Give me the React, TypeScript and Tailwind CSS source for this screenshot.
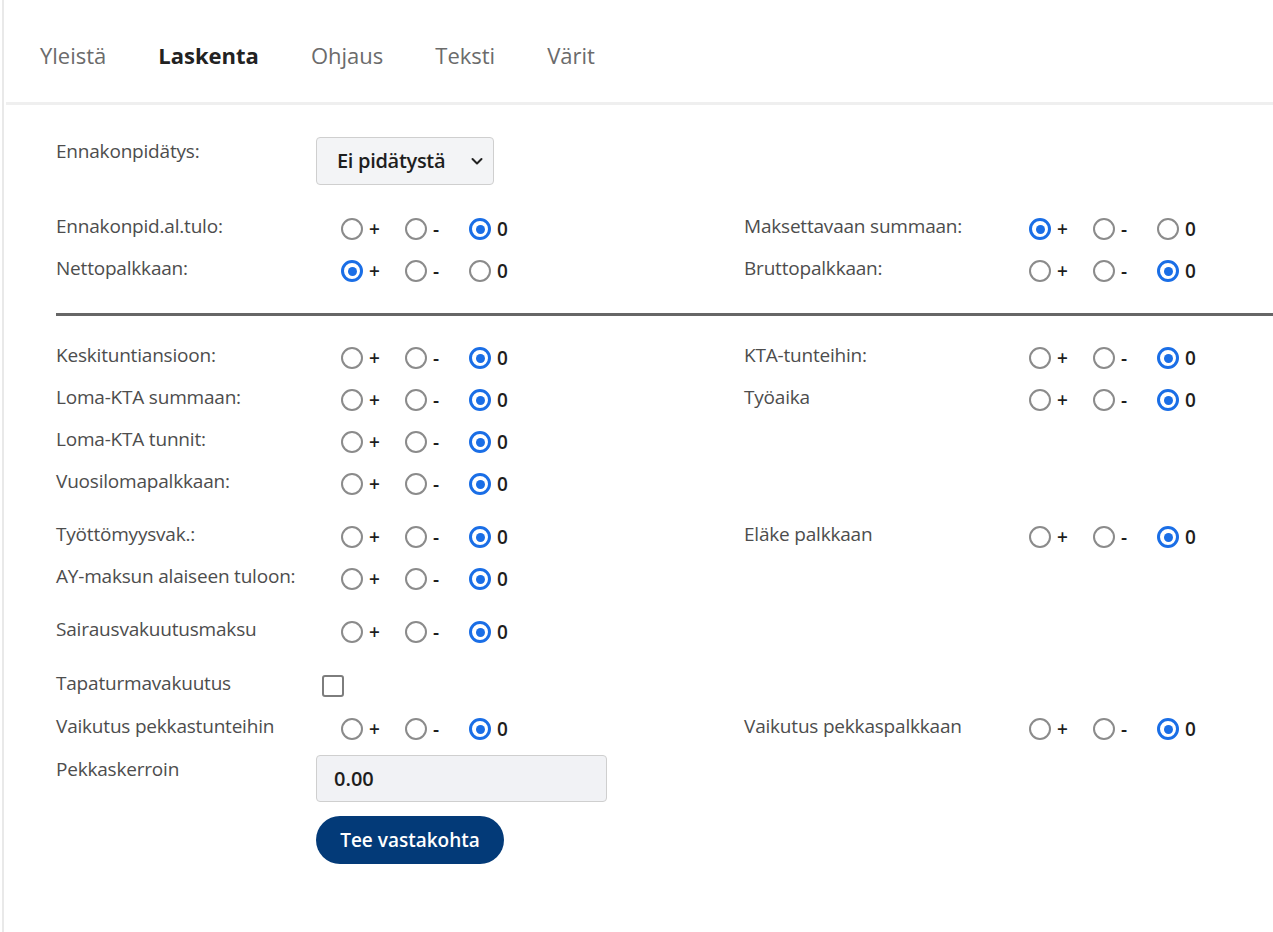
import React from "react";

type Choice = "+" | "-" | "0";

type Setting = {
  label: string;
  value: Choice;
};

const TABS = ["Yleistä", "Laskenta", "Ohjaus", "Teksti", "Värit"];

function Radio({ checked }: { checked: boolean }) {
  if (checked) {
    return (
      <span className="flex h-[22px] w-[22px] shrink-0 items-center justify-center rounded-full border-[3px] border-[#1a6ee6] bg-white">
        <span className="h-[9px] w-[9px] rounded-full bg-[#1a6ee6]" />
      </span>
    );
  }
  return (
    <span className="h-[22px] w-[22px] shrink-0 rounded-full border-[2.5px] border-[#8b8b8b] bg-white" />
  );
}

function RadioGroup({ value }: { value: Choice }) {
  const options: Choice[] = ["+", "-", "0"];
  return (
    <div className="flex items-center pl-[26px]">
      {options.map((opt) => (
        <label key={opt} className="flex w-[64px] items-center gap-[6px]">
          <Radio checked={value === opt} />
          <span className="text-[19px] font-semibold leading-none text-[#1e1e1e]">
            {opt}
          </span>
        </label>
      ))}
    </div>
  );
}

function Label({ children }: { children: React.ReactNode }) {
  return (
    <div className="mb-[6px] w-[259px] shrink-0 whitespace-nowrap text-[19px] tracking-[-0.2px] text-[#4d4d4d]">
      {children}
    </div>
  );
}

function Half({ item, wide }: { item?: Setting; wide?: boolean }) {
  return (
    <div
      className={`flex items-center ${wide ? "w-[688px] shrink-0" : "min-w-0 flex-1"}`}
    >
      {item && (
        <>
          <Label>{item.label}</Label>
          <RadioGroup value={item.value} />
        </>
      )}
    </div>
  );
}

function Row({
  left,
  right,
  className = "",
}: {
  left?: Setting;
  right?: Setting;
  className?: string;
}) {
  return (
    <div className={`flex h-[42px] ${className}`}>
      <Half item={left} wide />
      <Half item={right} />
    </div>
  );
}

export default function App() {
  return (
    <div
      className="min-h-[932px] overflow-hidden bg-white pl-[2px]"
      style={{ fontFamily: '"Open Sans", "Liberation Sans", sans-serif' }}
    >
      <div className="min-h-[932px] border-l-2 border-[#e9e9e9] pl-[2px]">
        {/* tabs */}
        <nav className="flex h-[105px] items-center gap-[52px] border-b-[3px] border-[#efefef] pl-[34px] pt-[9px] text-[22px] text-[#6b6b6b]">
          {TABS.map((tab) => (
            <span
              key={tab}
              className={
                tab === "Laskenta" ? "font-bold text-[#222222]" : ""
              }
            >
              {tab}
            </span>
          ))}
        </nav>

        <div className="pl-[50px] pt-[32px]">
          {/* withholding select */}
          <div className="flex h-[48px] items-start">
            <div className="w-[260px] shrink-0 text-[19px] tracking-[-0.2px] text-[#4d4d4d]">
              Ennakonpidätys:
            </div>
            <div className="flex h-[48px] w-[178px] items-center justify-between rounded-[4px] border border-[#cfcfcf] bg-[#f3f4f6] pl-[20px] pr-[9px]">
              <span className="text-[20px] font-semibold tracking-[-0.3px] text-[#1e1e1e]">
                Ei pidätystä
              </span>
              <svg width="14" height="14" viewBox="0 0 14 14" fill="none">
                <path
                  d="M2.5 5l4.5 4.5 4.5-4.5"
                  stroke="#222"
                  strokeWidth="2"
                  strokeLinecap="round"
                  strokeLinejoin="round"
                />
              </svg>
            </div>
          </div>

          <Row
            className="mt-[23px]"
            left={{ label: "Ennakonpid.al.tulo:", value: "0" }}
            right={{ label: "Maksettavaan summaan:", value: "+" }}
          />
          <Row
            left={{ label: "Nettopalkkaan:", value: "+" }}
            right={{ label: "Bruttopalkkaan:", value: "0" }}
          />

          <div className="mb-[21px] mt-[21px] h-[3px] bg-[#666666]" />

          <Row
            left={{ label: "Keskituntiansioon:", value: "0" }}
            right={{ label: "KTA-tunteihin:", value: "0" }}
          />
          <Row
            left={{ label: "Loma-KTA summaan:", value: "0" }}
            right={{ label: "Työaika", value: "0" }}
          />
          <Row left={{ label: "Loma-KTA tunnit:", value: "0" }} />
          <Row left={{ label: "Vuosilomapalkkaan:", value: "0" }} />

          <Row
            className="mt-[11px]"
            left={{ label: "Työttömyysvak.:", value: "0" }}
            right={{ label: "Eläke palkkaan", value: "0" }}
          />
          <Row left={{ label: "AY-maksun alaiseen tuloon:", value: "0" }} />
          <Row
            className="mt-[11px]"
            left={{ label: "Sairausvakuutusmaksu", value: "0" }}
          />

          {/* accident insurance */}
          <div className="mt-[11px] flex h-[44px] items-center">
            <Label>Tapaturmavakuutus</Label>
            <span className="ml-[7px] h-[22px] w-[22px] rounded-[3px] border-2 border-[#7d7d7d] bg-white" />
          </div>

          <Row
            left={{ label: "Vaikutus pekkastunteihin", value: "0" }}
            right={{ label: "Vaikutus pekkaspalkkaan", value: "0" }}
          />

          <div className="mt-[5px] flex items-start">
            <div className="w-[260px] shrink-0 text-[19px] tracking-[-0.2px] text-[#4d4d4d]">
              Pekkaskerroin
            </div>
            <div className="flex h-[47px] w-[291px] items-center rounded-[4px] border border-[#cfcfcf] bg-[#f1f2f5] px-[17px] text-[20px] font-semibold text-[#1e1e1e]">
              0.00
            </div>
          </div>

          <div className="ml-[260px] mt-[14px]">
            <button className="h-[48px] w-[188px] rounded-full bg-[#033a78] text-[19px] font-semibold text-white">
              Tee vastakohta
            </button>
          </div>
        </div>
      </div>
    </div>
  );
}
